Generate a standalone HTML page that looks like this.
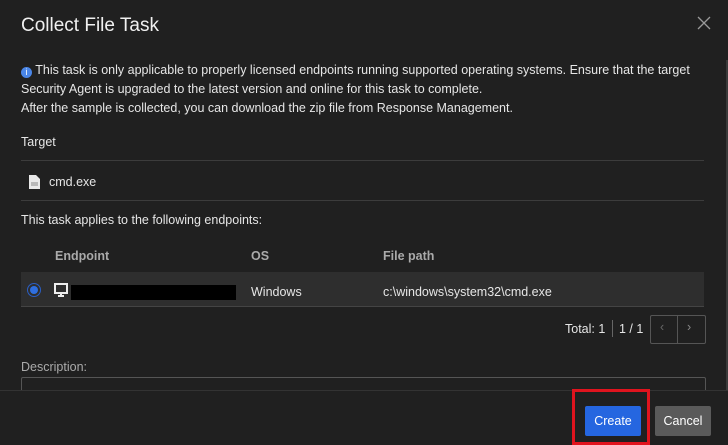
<!DOCTYPE html>
<html><head><style>
body{margin:0;width:728px;height:441px;background:#202020;font-family:"Liberation Sans",sans-serif;color:#e6e6e6;position:relative;overflow:hidden;font-size:12.5px}
.a{position:absolute;white-space:nowrap}
.sep{position:absolute;left:21px;width:683px;height:1px;background:#3c3c3c}
</style></head><body>
<div class="a" style="left:21px;top:15px;font-size:19px;color:#f0f0f0">Collect File Task</div>
<svg class="a" style="left:697px;top:16px" width="14" height="14"><path d="M1 1L13 13M13 1L1 13" stroke="#999" stroke-width="1.3"/></svg>
<div class="a" style="left:726px;top:60px;width:2px;height:330px;background:#3a3a3a"></div>
<div class="a" style="left:21px;top:61px;line-height:19px">
<span style="display:inline-block;width:11px;height:11px;border-radius:50%;background:#4a86e8;color:#fff;font-size:9px;text-align:center;line-height:11px;vertical-align:-1px">i</span> This task is only applicable to properly licensed endpoints running supported operating systems. Ensure that the target<br>Security Agent is upgraded to the latest version and online for this task to complete.<br>After the sample is collected, you can download the zip file from Response Management.</div>
<div class="a" style="left:21px;top:135px">Target</div>
<div class="sep" style="top:160px"></div>
<svg class="a" style="left:29px;top:175px" width="11" height="14"><path d="M0 0H7L11 4V14H0Z" fill="#e8e8e8"/><path d="M2 8H9M2 10H9" stroke="#888"/></svg>
<div class="a" style="left:49px;top:175px">cmd.exe</div>
<div class="sep" style="top:200px"></div>
<div class="a" style="left:21px;top:213px">This task applies to the following endpoints:</div>
<div class="a" style="left:55px;top:249px;color:#aaa;font-weight:bold">Endpoint</div>
<div class="a" style="left:251px;top:249px;color:#aaa;font-weight:bold">OS</div>
<div class="a" style="left:383px;top:249px;color:#aaa;font-weight:bold">File path</div>
<div class="a" style="left:21px;top:272px;width:683px;height:34px;background:#2e2e2e;border-bottom:1px solid #444"></div>
<div class="a" style="left:27px;top:283px;width:14px;height:14px;border-radius:50%;border:1.5px solid #2a5ec4;box-sizing:border-box"></div>
<div class="a" style="left:30px;top:286px;width:8px;height:8px;border-radius:50%;background:#2f6fe0"></div>
<svg class="a" style="left:54px;top:283px" width="14" height="14"><rect x="1" y="1" width="12" height="9" fill="none" stroke="#eee" stroke-width="2"/><path d="M7 10V13M4 13H10" stroke="#eee" stroke-width="2"/></svg>
<div class="a" style="left:71px;top:285px;width:165px;height:15px;background:#000"></div>
<div class="a" style="left:251px;top:285px">Windows</div>
<div class="a" style="left:383px;top:285px">c:\windows\system32\cmd.exe</div>
<div class="a" style="left:565px;top:322px">Total: 1</div>
<div class="a" style="left:612px;top:320px;width:1px;height:17px;background:#666"></div>
<div class="a" style="left:619px;top:322px">1 / 1</div>
<div class="a" style="left:650px;top:315px;width:54px;height:27px;border:1px solid #555;border-radius:2px"></div>
<div class="a" style="left:677px;top:316px;width:1px;height:27px;background:#555"></div>
<div class="a" style="left:660px;top:320px;color:#666">‹</div>
<div class="a" style="left:687px;top:320px;color:#888">›</div>
<div class="a" style="left:21px;top:360px;color:#aaa">Description:</div>
<div class="a" style="left:21px;top:377px;width:683px;height:20px;border:1px solid #555;border-radius:2px"></div>
<div class="a" style="left:0;top:390px;width:728px;height:51px;background:#202020;border-top:1px solid #333"></div>
<div class="a" style="left:585px;top:406px;width:56px;height:30px;background:#2566e0;border-radius:2px;color:#fff;text-align:center;line-height:30px">Create</div>
<div class="a" style="left:655px;top:406px;width:56px;height:30px;background:#5a5a5a;border-radius:2px;color:#fff;text-align:center;line-height:30px">Cancel</div>
<div class="a" style="left:572px;top:389px;width:72px;height:50px;border:3px solid #e0141e"></div>
</body></html>
